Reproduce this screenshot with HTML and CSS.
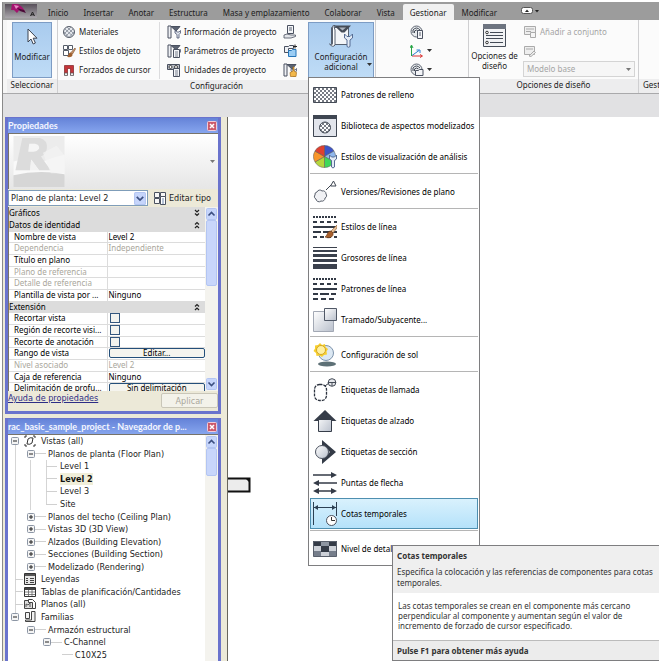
FILE: index.html
```html
<!DOCTYPE html>
<html lang="es">
<head>
<meta charset="utf-8">
<title>rac_basic_sample_project</title>
<link rel="stylesheet" href="styles.css">
</head>
<body>
<svg class="defs" aria-hidden="true">
  <defs>
    <linearGradient id="steel" x1="0" y1="0" x2="1" y2="1"><stop offset="0" stop-color="#fff"/><stop offset="1" stop-color="#b9c0cc"/></linearGradient>
    <linearGradient id="app" x1="0" y1="0" x2="0" y2="1"><stop offset="0" stop-color="#58505a"/><stop offset="1" stop-color="#a9a6ab"/></linearGradient>
    <pattern id="hatch" width="4" height="4" patternUnits="userSpaceOnUse"><path d="M0 0L4 4M4 0L0 4" stroke="#555b66" stroke-width=".8"/></pattern>
    <symbol id="i-wrench" viewBox="0 0 14 14"><path d="M1 1h3v12H1z" fill="#eef0f4" stroke="#4a5160"/><path d="M4 1.500h9L9 6z" fill="#5a6271" stroke="#4a5160"/><path d="M8 5.500v2.500l2 1.500v3.500h2V9.500l1.500-1.500V5.500l-1.500 1.500h-2z" fill="#e4e8f0" stroke="#4a5470" stroke-width=".8"/></symbol>
    <symbol id="i-plus" viewBox="0 0 8 8"><rect x=".5" y=".5" width="7" height="7" rx="1" fill="#f4f4f4" stroke="#8c96a5"/><path d="M2 4h4M4 2v4" stroke="#222"/></symbol>
    <symbol id="i-minus" viewBox="0 0 8 8"><rect x=".5" y=".5" width="7" height="7" rx="1" fill="#f4f4f4" stroke="#8c96a5"/><path d="M2 4h4" stroke="#222"/></symbol>
    <symbol id="i-up" viewBox="0 0 11 12"><rect x=".5" y=".5" width="10" height="11" rx="1" fill="#c6d5fb" stroke="#b3c5f2"/><path d="M2.500 7.500l3-3 3 3" fill="none" stroke="#3c4f80" stroke-width="1.600"/></symbol>
    <symbol id="i-down" viewBox="0 0 11 12"><rect x=".5" y=".5" width="10" height="11" rx="1" fill="#c6d5fb" stroke="#b3c5f2"/><path d="M2.500 4.500l3 3 3-3" fill="none" stroke="#3c4f80" stroke-width="1.600"/></symbol>
    <symbol id="i-fold" viewBox="0 0 6 8"><path d="M1 3.500l2-2 2 2M1 7l2-2 2 2" fill="none" stroke="#222" stroke-width="1.200"/></symbol>
    <symbol id="i-close" viewBox="0 0 10 10"><rect x=".5" y=".5" width="9" height="9" rx="1" fill="#cb5a6c" stroke="#f1cbd8"/><path d="M3 3l4 4M7 3L3 7" stroke="#fff" stroke-width="1.500"/></symbol>
    <symbol id="i-globe" viewBox="0 0 14 14"><circle cx="6.500" cy="6.500" r="5.500" fill="#e8ebee" stroke="#5c6370"/><path d="M3 8V5q3.500-4 7 0M4.500 8V6q2-2 4 0" fill="none" stroke="#444b57"/></symbol>
  </defs>
</svg>

<div class="window">
  <nav class="tabs">
    <button class="app" aria-label="Menú de la aplicación"><svg viewBox="0 0 32 14"><rect width="32" height="14" fill="url(#app)"/><path d="M7 0h6l4 3 3 4-5-2-3 4-3-3H6z" fill="#a3136f"/><path d="M9 1l5 1-3 3z" fill="#e58bc4"/><path d="M12 4l7 2 2 3-6-2z" fill="#4b0838"/><path d="M25.500 12l2-4 2 4M26 10.800h3" fill="none" stroke="#222"/></svg></button>
    <button>Inicio</button><button>Insertar</button><button>Anotar</button><button>Estructura</button><button>Masa y emplazamiento</button><button>Colaborar</button><button>Vista</button><button class="on">Gestionar</button><button>Modificar</button>
    <button class="mini" aria-label="Minimizar cinta"><svg width="20" height="8" viewBox="0 0 20 8"><rect x=".5" y=".5" width="11" height="6" rx="2" fill="#fff" stroke="#555"/><path d="M4 5l2-2.500L8 5z" fill="#222"/><path d="M14 3h4l-2 2.500z" fill="#222"/></svg></button>
  </nav>

  <div class="ribbon">
    <section class="panel p-select">
      <div class="body"><button class="big lit"><svg width="18" height="20" viewBox="0 0 18 20"><path d="M5 2v13l3-3 2.200 5 2.200-1-2.200-4.800H14z" fill="#fff" stroke="#3b4250"/></svg><span>Modificar</span></button></div>
      <h2>Seleccionar</h2>
    </section>
    <section class="panel p-config">
      <div class="body">
        <div class="stack first">
          <button><svg viewBox="0 0 14 14"><circle cx="7" cy="7" r="5.500" fill="#e6e9ee" stroke="#555c68"/><path d="M3 4l7.500 7M5 2l7 7M2 7l4.500 5M11 4l-7 7M9 2L2 9M12 7l-4.500 5" stroke="#737b88" stroke-width=".7"/></svg>Materiales</button>
          <button><svg viewBox="0 0 14 14"><path d="M1.500 1.500h4v4h-4zM6.500 1.500h4v4h-4zM1.500 6.500h5v5h-5z" fill="#fff" stroke="#555c68"/><path d="M13 4l-4 4.500 1.500 1.500L13.500 5z" fill="#c9966b" stroke="#7b4a29" stroke-width=".6"/><path d="M9 8.500c-3 0-2 3-4 4.500 3 .5 6 0 5.500-3z" fill="#a0602e"/></svg>Estilos de objeto</button>
          <button><svg viewBox="0 0 14 14"><path d="M2.500 12V2.500h9V12H8.500V5.500h-3V12z" fill="#c53539" stroke="#7d2226" stroke-width=".7"/><path d="M2.500 10h3v2.500h-3zM8.500 10h3v2.500h-3z" fill="#eee" stroke="#555" stroke-width=".7"/></svg>Forzados de cursor</button>
        </div>
        <div class="stack second">
          <button><svg viewBox="0 0 14 14"><use href="#i-wrench"/></svg>Información de proyecto</button>
          <button><svg viewBox="0 0 14 14"><use href="#i-wrench"/><path d="M6.500 5.500h6v8h-6z" fill="#f4f5f8" stroke="#4a5160"/><path d="M8 8h3M8 10h3M8 12h3" stroke="#5a6271" stroke-width=".8"/></svg>Parámetros de proyecto</button>
          <button><svg viewBox="0 0 14 14"><path d="M.5 1.500h12v5H.5z" fill="#b8bdc6" stroke="#4a5160"/><circle cx="3.500" cy="4" r="1.500" fill="#fff" stroke="#444"/><circle cx="9" cy="4" r="1.500" fill="#fff" stroke="#444"/><path d="M6.500 5.500h6v8h-6z" fill="#f4f5f8" stroke="#4a5160"/><path d="M8 8h3M8 10h3M8 12h3" stroke="#5a6271" stroke-width=".8"/></svg>Unidades de proyecto</button>
        </div>
        <div class="stack third">
          <button aria-label="Parámetros compartidos"><svg viewBox="0 0 14 14"><path d="M4.500.500h6v8h-6z" fill="#f4f5f8" stroke="#4a5160"/><path d="M6 3h3M6 5h3" stroke="#5a6271"/><path d="M1 10l3-1 4 1h4.500v1.500L8 13H1z" fill="#e3e5e9" stroke="#4a5160" stroke-width=".8"/></svg></button>
          <button aria-label="Transferir normas"><svg viewBox="0 0 14 14"><path d="M1.500 2.500h4l1-1h4v3h-5v4h-4z" fill="#eef0f4" stroke="#4a5160"/><path d="M5.500 6.500h3l1-1h3.500v7H5.500z" fill="#9bcdf4" stroke="#2575b8"/><path d="M12 .5v4M10 2.500h4" stroke="#222"/></svg></button>
          <button aria-label="Limpiar no utilizado"><svg viewBox="0 0 14 14"><use href="#i-wrench"/><path d="M10 4v4l-3 1.500.5 4h5.500l.5-4-2.500-1.500V4z" fill="#f2b84b" stroke="#a86d17" stroke-width=".7"/></svg></button>
        </div>
        <button class="big lit wide" aria-expanded="true"><svg width="26" height="25" viewBox="0 0 26 25"><path d="M3.500 3.500h17v17h-17z" fill="#f3f5f8" stroke="#566070"/><path d="M1.500 20q3 2 3-1V3.500Q4 1 7 1.500 5 2 7 6v15q-2 3-5.500-1z" fill="#fff" stroke="#566070"/><path d="M6 1.500h17l-6.500 7h-3z" fill="#454c58"/><path d="M11 3.500h7l-3.500 3z" fill="#aeb5c0"/><path d="M16.500 10v4l2.500 2v6.500q1.500 1.500 3 0V16l2.500-2v-4L22 12.500h-3z" fill="#e3ebf6" stroke="#566c93"/></svg><span>Configuración<br>adicional</span><svg class="caret" width="5" height="3" viewBox="0 0 5 3"><path d="M0 0h5L2.500 3z" fill="#333"/></svg></button>
      </div>
      <h2>Configuración</h2>
    </section>
    <section class="panel p-place">
      <div class="body">
        <div class="stack">
          <button aria-label="Ubicación"><svg viewBox="0 0 14 14"><use href="#i-globe"/><path d="M7.500 5.500h5v8h-5z" fill="#f4f5f8" stroke="#4a5160"/><path d="M9 8h2M9 10h2" stroke="#5a6271"/></svg></button>
          <button aria-label="Coordenadas"><svg viewBox="0 0 14 14"><path d="M1.500 12V2M0 4l1.500-3L3 4" stroke="#26a445" fill="none"/><path d="M2 12h9.500M10 10.500l2.500 1.500-2.500 1.500" stroke="#d93434" fill="none"/><path d="M2 11.500L9 6.500M6.500 6H10v3" stroke="#2d7fd0" fill="none"/></svg><svg class="tri" viewBox="0 0 5 3"><path d="M0 0h5L2.500 3z" fill="#333"/></svg></button>
          <button aria-label="Posición"><svg viewBox="0 0 14 14"><use href="#i-globe"/><path d="M5.500 7.500h3l1-1h3.500v6H5.500z" fill="#f4f5f8" stroke="#4a5160"/></svg><svg class="tri" viewBox="0 0 5 3"><path d="M0 0h5L2.500 3z" fill="#333"/></svg></button>
        </div>
      </div>
      <h2></h2>
    </section>
    <section class="panel p-design">
      <div class="body">
        <button class="big wide"><svg width="25" height="25" viewBox="0 0 25 25"><path d="M1.500 1.500h22v22h-22z" fill="#f2f3f5" stroke="#474e59"/><path d="M1 1h23v5H1z" fill="#6d7480"/><circle cx="5" cy="9.500" r="1.300" fill="#fff" stroke="#333"/><circle cx="5" cy="19.500" r="1.300" fill="#fff" stroke="#333"/><path d="M8 9.500h13M4 12.500h17M4 15.500h17M8 19.500h13" stroke="#444b56"/></svg><span>Opciones de<br>diseño</span></button>
        <div class="stack dim">
          <button disabled><svg viewBox="0 0 14 14"><path d="M1.500 1.500h11v8h-11z" fill="#eee" stroke="#aaa"/><path d="M3 4h8M3 6.500h5" stroke="#aaa"/><path d="M7.500 7.500h5v5h-5z" fill="#f5f5f5" stroke="#aaa"/></svg>Añadir a conjunto</button>
          <button disabled aria-label="Seleccionar para editar"><svg viewBox="0 0 14 14"><path d="M1.500 2.500h10v8h-10z" fill="#eee" stroke="#aaa"/><path d="M3 5h7M6 12l5-5 1.500 1.500-4.500 4z" fill="#eee" stroke="#aaa"/></svg></button>
          <label class="pick"><select aria-label="Opción activa" disabled><option>Modelo base</option></select><svg class="tri" viewBox="0 0 5 3"><path d="M0 0h5L2.500 3z" fill="#777"/></svg></label>
        </div>
      </div>
      <h2>Opciones de diseño</h2>
    </section>
    <section class="panel p-rest"><div class="body"></div><h2>Gest</h2></section>
  </div>

  <div class="options"></div>

  <div class="work">
    <aside class="dock">
      <section class="palette props">
        <header><h3>Propiedades</h3><button aria-label="Cerrar propiedades"><svg viewBox="0 0 10 10"><use href="#i-close"/></svg></button></header>
        <div class="preview"><svg class="thumb" viewBox="0 0 52 52"><rect width="52" height="52" fill="#ececec"/><path d="M0 26q16-5 26 2 12-6 26-9v21H0z" fill="#f9f9f9"/><path d="M9 2h18q8 2 7 11-1 6-6 8l10 14H26L18 24l-1 11H2z" fill="#dcdcdc"/><path d="M16 8h6q5 1 4 5-2 3-6 3h-5z" fill="#f5f5f5"/><path d="M17 35l1-11 8 11z" fill="#f2f2f2"/><path d="M0 40q26-6 52-1v13H0z" fill="#d6d6d6"/><path d="M30 17l14-7 8 10v18H38z" fill="#f4f4f4" opacity=".7"/></svg><svg class="tri" viewBox="0 0 5 3"><path d="M0 0h5L2.500 3z" fill="#777"/></svg></div>
        <div class="typebar">
          <label class="combo"><select aria-label="Tipo"><option>Plano de planta: Level 2</option></select><svg viewBox="0 0 11 12"><use href="#i-down"/></svg></label>
          <button class="edit"><svg viewBox="0 0 14 14"><path d="M1.500 1.500h5v5h-5zM7.500 1.500h5v4h-5zM1.500 7.500h5v5h-5z" fill="#f7f7f7" stroke="#4a5160"/><path d="M7.500 5.500h5v8h-5z" fill="#fff" stroke="#4a5160"/><path d="M9 8h2M9 10h2M9 12h2" stroke="#4a6a9a" stroke-width=".8"/></svg>Editar tipo</button>
        </div>
        <div class="gridbox">
          <table>
            <tbody>
            <tr class="cat"><th colspan="2">Gráficos<svg class="flip" viewBox="0 0 6 8"><use href="#i-fold"/></svg></th></tr>
            <tr class="cat"><th colspan="2">Datos de identidad<svg viewBox="0 0 6 8"><use href="#i-fold"/></svg></th></tr>
            <tr><th>Nombre de vista</th><td>Level 2</td></tr>
            <tr class="ro"><th>Dependencia</th><td>Independiente</td></tr>
            <tr><th>Título en plano</th><td></td></tr>
            <tr class="ro"><th>Plano de referencia</th><td></td></tr>
            <tr class="ro"><th>Detalle de referencia</th><td></td></tr>
            <tr><th>Plantilla de vista por ...</th><td>Ninguno</td></tr>
            <tr class="cat"><th colspan="2">Extensión<svg viewBox="0 0 6 8"><use href="#i-fold"/></svg></th></tr>
            <tr><th><label for="c1">Recortar vista</label></th><td><input id="c1" type="checkbox"></td></tr>
            <tr><th><label for="c2">Región de recorte visi...</label></th><td><input id="c2" type="checkbox"></td></tr>
            <tr><th><label for="c3">Recorte de anotación</label></th><td><input id="c3" type="checkbox"></td></tr>
            <tr><th>Rango de vista</th><td><button>Editar...</button></td></tr>
            <tr class="ro"><th>Nivel asociado</th><td>Level 2</td></tr>
            <tr><th>Caja de referencia</th><td>Ninguno</td></tr>
            <tr><th>Delimitación de profu...</th><td><button>Sin delimitación</button></td></tr>
            </tbody>
          </table>
          <div class="bar"><svg viewBox="0 0 11 12"><use href="#i-up"/></svg><i class="thumbbar"></i><svg class="end" viewBox="0 0 11 12"><use href="#i-down"/></svg></div>
        </div>
        <footer><a href="#ayuda">Ayuda de propiedades</a><button disabled>Aplicar</button></footer>
      </section>

      <section class="palette browser">
        <header><h3>rac_basic_sample_project - Navegador de p...</h3><button aria-label="Cerrar navegador"><svg viewBox="0 0 10 10"><use href="#i-close"/></svg></button></header>
        <div class="treebox">
          <ul class="tree">
            <li><svg class="box" viewBox="0 0 8 8"><use href="#i-minus"/></svg><svg class="pic" viewBox="0 0 12 12"><path d="M1 3V1h2M9 1h2v2M11 9v2H9M3 11H1V9" fill="none" stroke="#333"/><path d="M4 4q2-2 5-1L8 8q-2 2-5 1z" fill="#fff" stroke="#333"/></svg>Vistas (all)</li>
            <li class="l1"><svg class="box" viewBox="0 0 8 8"><use href="#i-minus"/></svg><i></i>Planos de planta (Floor Plan)</li>
            <li class="l2"><i></i>Level 1</li>
            <li class="l2 cur"><i></i><b>Level 2</b></li>
            <li class="l2"><i></i>Level 3</li>
            <li class="l2 last"><i></i>Site</li>
            <li class="l1"><svg class="box" viewBox="0 0 8 8"><use href="#i-plus"/></svg><i></i>Planos del techo (Ceiling Plan)</li>
            <li class="l1"><svg class="box" viewBox="0 0 8 8"><use href="#i-plus"/></svg><i></i>Vistas 3D (3D View)</li>
            <li class="l1"><svg class="box" viewBox="0 0 8 8"><use href="#i-plus"/></svg><i></i>Alzados (Building Elevation)</li>
            <li class="l1"><svg class="box" viewBox="0 0 8 8"><use href="#i-plus"/></svg><i></i>Secciones (Building Section)</li>
            <li class="l1"><svg class="box" viewBox="0 0 8 8"><use href="#i-plus"/></svg><i></i>Modelizado (Rendering)</li>
            <li class="leaf"><i></i><svg class="pic" viewBox="0 0 12 12"><path d="M.5.500h11v11H.5z" fill="#e6e6e6" stroke="#333"/><path d="M1 1h10v2H1z" fill="#555"/><path d="M2 5.500h2M2 7.500h2M2 9.500h2M6 5.500h4M6 7.500h4M6 9.500h4" stroke="#444"/></svg>Leyendas</li>
            <li class="leaf"><i></i><svg class="pic" viewBox="0 0 12 12"><path d="M.5 1.500h11v9H.5z" fill="#fff" stroke="#333"/><path d="M1 2h10v2H1z" fill="#444"/><path d="M1 6h10M1 8.500h10M4.500 4v6M8 4v6" stroke="#666" stroke-width=".8"/></svg>Tablas de planificación/Cantidades</li>
            <li class="leaf"><i></i><svg class="pic" viewBox="0 0 12 12"><path d="M.5 2.500h8v8h-8z" fill="#ddd" stroke="#444"/><path d="M4.500 1.500h4l3 3v6h-3v-6h-4z" fill="#fff" stroke="#444"/><path d="M2 9V6l2 1 2-2v4" fill="none" stroke="#555"/></svg>Planos (all)</li>
            <li><svg class="box" viewBox="0 0 8 8"><use href="#i-minus"/></svg><svg class="pic" viewBox="0 0 12 12"><path d="M1.500 1.500h4v6h-4zM7.500.500h3.500v10H1.500v-1.500H7.500z" fill="#f2f2f2" stroke="#444"/></svg>Familias</li>
            <li class="l1"><svg class="box" viewBox="0 0 8 8"><use href="#i-minus"/></svg><i></i>Armazón estructural</li>
            <li class="l2 open"><svg class="box" viewBox="0 0 8 8"><use href="#i-minus"/></svg><i></i>C-Channel</li>
            <li class="l3 last"><i></i>C10X25</li>
          </ul>
          <div class="bar"><svg viewBox="0 0 11 12"><use href="#i-up"/></svg><i class="thumbbar"></i></div>
        </div>
      </section>
    </aside>
    <main class="canvas"><svg viewBox="0 0 23 17"><path d="M0 1.500h21.500v13H0" fill="#ececec" stroke="#111" stroke-width="2"/><path d="M18 2h3v3z" fill="#111"/></svg></main>
  </div>

  <div class="menu">
    <button><svg viewBox="0 0 24 24"><path d="M.5 4.500h23v15H.5z" fill="#fff"/><path d="M.5 4.500h23v15H.5z" fill="url(#hatch)" stroke="#444b56"/></svg>Patrones de relleno</button>
    <button><svg viewBox="0 0 24 24"><path d="M.5 1.500h23v21H.5z" fill="#e2e5ec" stroke="#3f4652"/><path d="M0 1h24v4H0z" fill="#3f4652"/><circle cx="12" cy="13.500" r="5.500" fill="#fff"/><circle cx="12" cy="13.500" r="5.500" fill="url(#hatch)" stroke="#444b56"/></svg>Biblioteca de aspectos modelizados</button>
    <button><svg viewBox="0 0 24 24"><g stroke="#555" stroke-width=".5"><path d="M11.500 11.500V.500a11 11 0 0 1 9.500 5.500z" fill="#3d55c8"/><path d="M11.500 11.500L21 6a11 11 0 0 1 0 11z" fill="#8fb7ee"/><path d="M11.500 11.500L21 17a11 11 0 0 1-9.500 5.500z" fill="#3fd85a"/><path d="M11.500 11.500v11A11 11 0 0 1 2 17z" fill="#b5d63c"/><path d="M11.500 11.500L2 17A11 11 0 0 1 2 6z" fill="#f8962a"/><path d="M11.500 11.500L2 6A11 11 0 0 1 11.500.500z" fill="#e0402f"/></g><path d="M16.500 10v4l2 1.500V22q1.500 2 3 0v-6.500l2-1.500v-4L21.500 12h-3z" fill="#e3ebf6" stroke="#566c93"/></svg>Estilos de visualización de análisis</button>
    <hr>
    <button><svg viewBox="0 0 24 24"><path d="M4 12a3 3 0 0 1 5-1 3 3 0 0 1 4 3 2.500 2.500 0 0 1-1 4 3 3 0 0 1-4 3 3 3 0 0 1-5-2 2.500 2.500 0 0 1-1-4 2.500 2.500 0 0 1 2-3z" fill="#f0f1f4" stroke="#59606c"/><path d="M13 10l5-5M17.500 6l3-5 2.500 5z" fill="#fff" stroke="#3f4652"/></svg>Versiones/Revisiones de plano</button>
    <hr>
    <button><svg viewBox="0 0 24 24"><path d="M0 2h24" stroke="#333a46" stroke-width="2" stroke-dasharray="2 1"/><path d="M0 7h24" stroke="#333a46" stroke-width="2" stroke-dasharray="4 3"/><path d="M0 12h24" stroke="#333a46" stroke-width="2"/><path d="M0 17h24" stroke="#333a46" stroke-width="2" stroke-dasharray="8 2"/><path d="M0 22h24" stroke="#333a46" stroke-width="2" stroke-dasharray="4 3"/><path d="M24 10l-6 6 2 2 4-5z" fill="#e6be95" stroke="#8a5c37" stroke-width=".6"/><path d="M18 16c-4 0-3 4-6 6 4 2 9 0 8-4z" fill="#a8602d" stroke="#5e3212" stroke-width=".6"/></svg>Estilos de línea</button>
    <button><svg viewBox="0 0 24 24"><path d="M0 1h24v1H0zM0 4h24v2H0zM0 8h24v3H0zM0 13h24v3H0zM0 18h24v5H0z" fill="#3b414d"/></svg>Grosores de línea</button>
    <button><svg viewBox="0 0 24 24"><path d="M0 2h24" stroke="#333a46" stroke-width="2" stroke-dasharray="2 1"/><path d="M0 7h24" stroke="#333a46" stroke-width="2" stroke-dasharray="4 3"/><path d="M0 12h24" stroke="#333a46" stroke-width="2"/><path d="M0 17h24" stroke="#333a46" stroke-width="2" stroke-dasharray="5 2 9 2"/><path d="M0 22h24" stroke="#333a46" stroke-width="2" stroke-dasharray="5 3"/></svg>Patrones de línea</button>
    <button><svg viewBox="0 0 24 24"><path d="M.5 3.500h20v20H.5z" fill="url(#steel)" stroke="#a2a8b4"/><path d="M11.500.500h12v12h-12z" fill="url(#steel)" stroke="#505866"/></svg>Tramado/Subyacente...</button>
    <hr>
    <button><svg viewBox="0 0 24 24"><ellipse cx="14" cy="21" rx="9" ry="2.500" fill="#5d7076"/><circle cx="13" cy="10" r="7.500" fill="#dce8f3" stroke="#7d93ab"/><path d="M7 0l2 2 3-1 .5 3L15 6l-1.500 2.500.5 3-3 .5L9 14l-2.500-1.500-3 .5L3 10 .5 8 2 5.500 2 2.500l3-.5z" fill="#f8cf2c"/><circle cx="8" cy="7" r="4.500" fill="#fff0a0" stroke="#d3a625"/></svg>Configuración de sol</button>
    <hr>
    <button><svg viewBox="0 0 24 24"><rect x="1.500" y="6.500" width="12" height="16" rx="5" fill="none" stroke="#2d3440" stroke-width="1.300" stroke-dasharray="3 1"/><path d="M12 8l4-3" stroke="#2d3440"/><circle cx="19" cy="4.500" r="3.800" fill="#e6e8ec" stroke="#444b56"/><path d="M15 4.500h8M19 5v3" stroke="#444b56"/></svg>Etiquetas de llamada</button>
    <button><svg viewBox="0 0 24 24"><path d="M12 1L.5 12h23z" fill="#363d49"/><path d="M5.500 10.500L12 5l6.500 5.500v12h-13z" fill="url(#steel)" stroke="#363d49"/><path d="M5 11L12 3.500l7 7.500z" fill="#363d49"/></svg>Etiquetas de alzado</button>
    <button><svg viewBox="0 0 24 24"><path d="M9 0l14 12L9 24v-5l8-7-8-7z" fill="#343b47"/><circle cx="9" cy="12" r="6.500" fill="url(#steel)" stroke="#4c5360"/></svg>Etiquetas de sección</button>
    <button><svg viewBox="0 0 24 24"><path d="M0 4h20M4 12h20M3 20h18" stroke="#343b47" stroke-width="1.300"/><path d="M18 1l6 3-6 3zM6 9l-6 3 6 3zM6 17l-6 3 6 3zM18 17l6 3-6 3z" fill="#343b47"/></svg>Puntas de flecha</button>
    <button class="hot"><svg viewBox="0 0 24 24"><path d="M.5 0v23M23.500 0v14M1 5.500h22" stroke="#2c4053"/><path d="M5 3L1 5.500 5 8zM19 3l4 2.500L19 8z" fill="#2c4053"/><circle cx="18.500" cy="18.500" r="5" fill="#fff" stroke="#4c5360"/><path d="M18.500 15v3.500H22" fill="none" stroke="#333"/></svg>Cotas temporales</button>
    <hr>
    <button><svg viewBox="0 0 24 24"><path d="M0 4h24v16H0z" fill="#cdd1d8"/><path d="M0 4h8v5H0zM8 9h8v6H8zM16 4h8v5h-8z" fill="#343b47"/><path d="M0 14h8v5H0zM16 14h8v5h-8z" fill="#767e8b"/><path d="M8 4h8v5H8z" fill="#8d95a1"/><path d="M.5 4.500h23v15H.5z" fill="none" stroke="#59606c"/></svg>Nivel de detalle</button>
  </div>

  <div class="tip" role="tooltip">
    <div class="head"><strong>Cotas temporales</strong><p>Especifica la colocación y las referencias de componentes para cotas temporales.</p></div>
    <p class="long">Las cotas temporales se crean en el componente más cercano perpendicular al componente y aumentan según el valor de incremento de forzado de cursor especificado.</p>
    <strong class="foot">Pulse F1 para obtener más ayuda</strong>
  </div>
</div>
</body>
</html>
```
FILE: styles.css
```css
* { box-sizing: border-box; }
html, body { height: 100%; }
body {
  margin: 0;
  padding: 2px;
  background: #fff;
  color: #1c1c1c;
  font: 8px/12px "Noto Sans", "Open Sans", Tahoma, sans-serif;
}
button, select, input { font: inherit; color: inherit; margin: 0; }
button { border: 0; background: none; padding: 0; text-align: left; white-space: nowrap; }
h2, h3, p, ul { margin: 0; padding: 0; font: inherit; }
svg { display: block; flex: none; }
.defs { position: absolute; width: 0; height: 0; }

.window {
  position: relative;
  display: flex;
  flex-direction: column;
  height: 100%;
  overflow: hidden;
  border-left: 1px solid #8a8a8a;
  background: #e1e1e3;
}

/* Ribbon tabs */
.tabs { display: flex; flex: none; height: 18px; padding-left: 2px; background: #9c9c9c; }
.tabs button { padding: 3px 8px 0 7px; }
.tabs .app { width: 33px; padding: 0; margin-right: 3px; }
.app svg { width: 32px; height: 14px; }
.tabs .on { background: #f1f1f1; border-radius: 2px 2px 0 0; margin-top: 2px; padding-top: 1px; }
.tabs .mini { padding: 0 0 0 16px; }

/* Ribbon panels */
.ribbon { display: flex; flex: none; height: 74px; padding-left: 4px; background: #f6f6f6; border-bottom: 1px solid #a9a9ab; }
.panel { display: flex; flex-direction: column; flex: none; border-right: 1px solid #cfcfd1; overflow: hidden; }
.panel h2 { flex: none; height: 14px; background: #ededee; text-align: center; white-space: nowrap; line-height: 12px; }
.body { display: flex; flex: 1; padding: 2px 0 1px; background: #fbfbfb; }
.p-select { width: 51px; }
.p-select .body { padding-left: 5px; padding-right: 5px; }
.p-config { width: 318px; }
.p-place { width: 93px; }
.p-place .body { padding-left: 34px; }
.p-design { width: 170px; }
.p-rest { flex: 1; border: 0; }
.p-rest h2 { text-align: left; padding-left: 4px; }

.big { display: flex; flex-direction: column; align-items: center; gap: 5px; width: 40px; padding-top: 4px; }
.big span { text-align: center; line-height: 10px; }
.lit { border: 1px solid #7d9cc4; background: linear-gradient(#a9cbee, #bfdcf6); }
.wide { position: relative; width: 66px; padding-top: 1px; gap: 3px; }
.caret { position: absolute; right: 1px; bottom: 12px; }
.stack { display: flex; flex-direction: column; }
.stack button { display: flex; align-items: center; gap: 3px; height: 19px; }
.stack svg { width: 14px; height: 14px; }
.stack .tri, .tri { width: 5px; height: 3px; }
.first { width: 102px; padding-left: 4px; border-right: 1px solid #dcdcde; }
.second { width: 123px; padding-left: 7px; }
.third { width: 25px; }
.dim { flex: 1; color: #a5a5a5; padding: 0 3px 0 3px; }
.p-design .wide { width: 51px; }
.pick { display: flex; align-items: center; border: 1px solid #d4d4d4; background: #f6f6f6; padding-right: 3px; height: 16px; margin-top: 1px; }
.pick select, .combo select { flex: 1; min-width: 0; appearance: none; border: 0; background: none; padding: 0 3px; opacity: 1; }

.options { flex: none; height: 23px; }

/* Docked palettes */
.work { display: flex; flex: 1; min-height: 0; }
.dock { display: flex; flex-direction: column; gap: 4px; width: 225px; padding: 0 6px 0 2px; background: #ece9d8; border-right: 1px solid #68655c; }
.palette { display: flex; flex-direction: column; border: 3px solid #6a73cd; border-top-width: 1px; background: #ece9d8; }
.palette header { display: flex; align-items: center; flex: none; height: 15px; background: linear-gradient(#6583d8, #86a5ee); padding-right: 1px; }
.palette h3 { flex: 1; min-width: 0; font: bold 9px/12px Lato, "Trebuchet MS", sans-serif; white-space: nowrap; color: #f4f6ff; }
.palette header svg { width: 10px; height: 10px; }
.preview { display: flex; align-items: center; justify-content: space-between; height: 56px; padding: 0 3px 0 4px; border-top: 1px solid #77736a; border-left: 1px solid #77736a; background: linear-gradient(#fff, #e6e6e6); }
.thumb { width: 52px; height: 51px; }
.typebar, .palette footer, .tree { font: 9px/12px "DejaVu Sans Condensed", Tahoma, sans-serif; }
.typebar { display: flex; align-items: center; height: 18px; gap: 5px; }
.combo { display: flex; align-items: center; width: 140px; height: 16px; border: 1px solid #7f9db9; background: #fff; padding-right: 1px; }
.combo svg { width: 12px; height: 13px; }
.combo select { padding: 0 2px; }
.edit { display: flex; align-items: center; gap: 2px; }
.edit svg { width: 14px; height: 14px; }
.gridbox { display: flex; height: 184px; overflow: hidden; background: #fff; border-left: 1px solid #77736a; }
table { flex: 1; align-self: flex-start; border-collapse: collapse; table-layout: fixed; width: 100%; }
tr { height: 12px; }
tr:nth-child(3n) { height: 11px; }
th, td { padding: 0 0 0 5px; border-bottom: 1px solid #dcdcdc; line-height: 10px; font-weight: normal; text-align: left; white-space: nowrap; overflow: hidden; color: #000; }
td { padding-left: 1px; border-left: 1px solid #dcdcdc; }
.cat th { padding-left: 0; background: #dcdcdc; }
.cat svg { float: right; width: 6px; height: 8px; margin: 1px 5px 0 0; }
.cat .flip { rotate: 180deg; }
.ro th, .ro td { color: #aaa79c; }
td input { display: block; appearance: none; width: 10px; height: 10px; border: 1px solid #33567e; background: #f3f3ef; margin-left: 1px; }
td button { display: block; width: 100%; height: 10px; text-align: center; line-height: 8px; border: 1px solid #244f7a; border-radius: 2px; background: #f5f4ee; }
.bar { display: flex; flex-direction: column; flex: none; width: 13px; padding: 1px; background: #f4f3ee; }
.bar svg { width: 11px; height: 12px; }
.bar .end { margin-top: auto; }
.thumbbar { height: 66px; border: 1px solid #b3c5f2; border-radius: 2px; background: #c8d6fb; }
.browser .thumbbar { height: 28px; }
.palette footer { display: flex; justify-content: space-between; height: 20px; padding-top: 1px; }
footer a { color: #2d2d86; }
footer button { width: 57px; height: 15px; border: 1px solid #c9c6b8; background: #f3f2ea; color: #aaa79c; text-align: center; margin-top: 1px; border-radius: 2px; }

/* Project browser */
.browser { flex: 1; min-height: 0; border-bottom: 0; }
.treebox { display: flex; flex: 1; min-height: 0; background: #fff; border-top: 1px solid #77736a; }
.tree { flex: 1; display: grid; grid-auto-rows: minmax(0, 1fr); list-style: none; padding-left: 3px; background: linear-gradient(#d5d5d5, #d5d5d5) 7px 6px / 1px 175px no-repeat; }
.tree li { display: flex; align-items: center; white-space: nowrap; color: #222; }
.tree .box { width: 8px; height: 8px; margin-right: 5px; }
.tree .pic { width: 12px; height: 12px; margin-right: 5px; }
.tree i { width: 8px; border-top: 1px solid #d0d0d0; margin-right: 2px; }
.tree .box + i { margin-left: -5px; width: 11px; }
.tree .l1 { padding-left: 16px; }
.tree .l2 { padding-left: 35px; background: linear-gradient(#d5d5d5, #d5d5d5) 35px 0 / 1px 100% no-repeat, linear-gradient(#d5d5d5, #d5d5d5) 19px 0 / 1px 100% no-repeat; }
.tree .l2.last { background-size: 1px 50%, 1px 100%; }
.tree .l2 > i:first-child { width: 11px; margin-right: 3px; }
.tree .l2.open { padding-left: 32px; background: none; }
.tree .l3 { padding-left: 51px; }
.tree .l3 > i { width: 11px; }
.tree .leaf { padding-left: 4px; }
.tree .leaf i { margin-right: 1px; }
.cur b { background: #f0eed9; color: #111; }

.canvas { flex: 1; background: #fff; padding-top: 360px; }
.canvas svg { width: 23px; height: 17px; }

/* Drop-down menu */
.menu { position: absolute; left: 305px; top: 75px; width: 172px; display: flex; flex-direction: column; padding: 1px; border: 1px solid #7e7e80; background: #fff; }
.menu button { display: flex; align-items: center; gap: 4px; height: 31px; padding-left: 2px; border: 1px solid transparent; color: #000; }
.menu svg { width: 24px; height: 24px; }
.menu hr { width: 100%; height: 1px; margin: 1px 0 2px; border: 0; background: #b5b5b5; }
.menu .hot { border-color: #4e8fb0; background: linear-gradient(#d9f1fd, #b5e2fa); }

/* Tooltip */
.tip { position: absolute; left: 389px; right: 0; bottom: 0; height: 116px; display: flex; flex-direction: column; border: 1px solid #7e7e80; border-right: 0; background: #fff; color: #333; }
.tip .head { height: 47px; padding: 4px 0 0 4px; background: #efefef; }
.tip strong { color: #333; display: block; }
.tip .head p { line-height: 11px; margin-top: 4px; }
.tip .long { flex: 1; padding: 8px 4px 0 5px; line-height: 10px; }
.tip .foot { height: 20px; padding: 4px 0 0 4px; border-top: 1px solid #bbb; background: #ececec; }
```
